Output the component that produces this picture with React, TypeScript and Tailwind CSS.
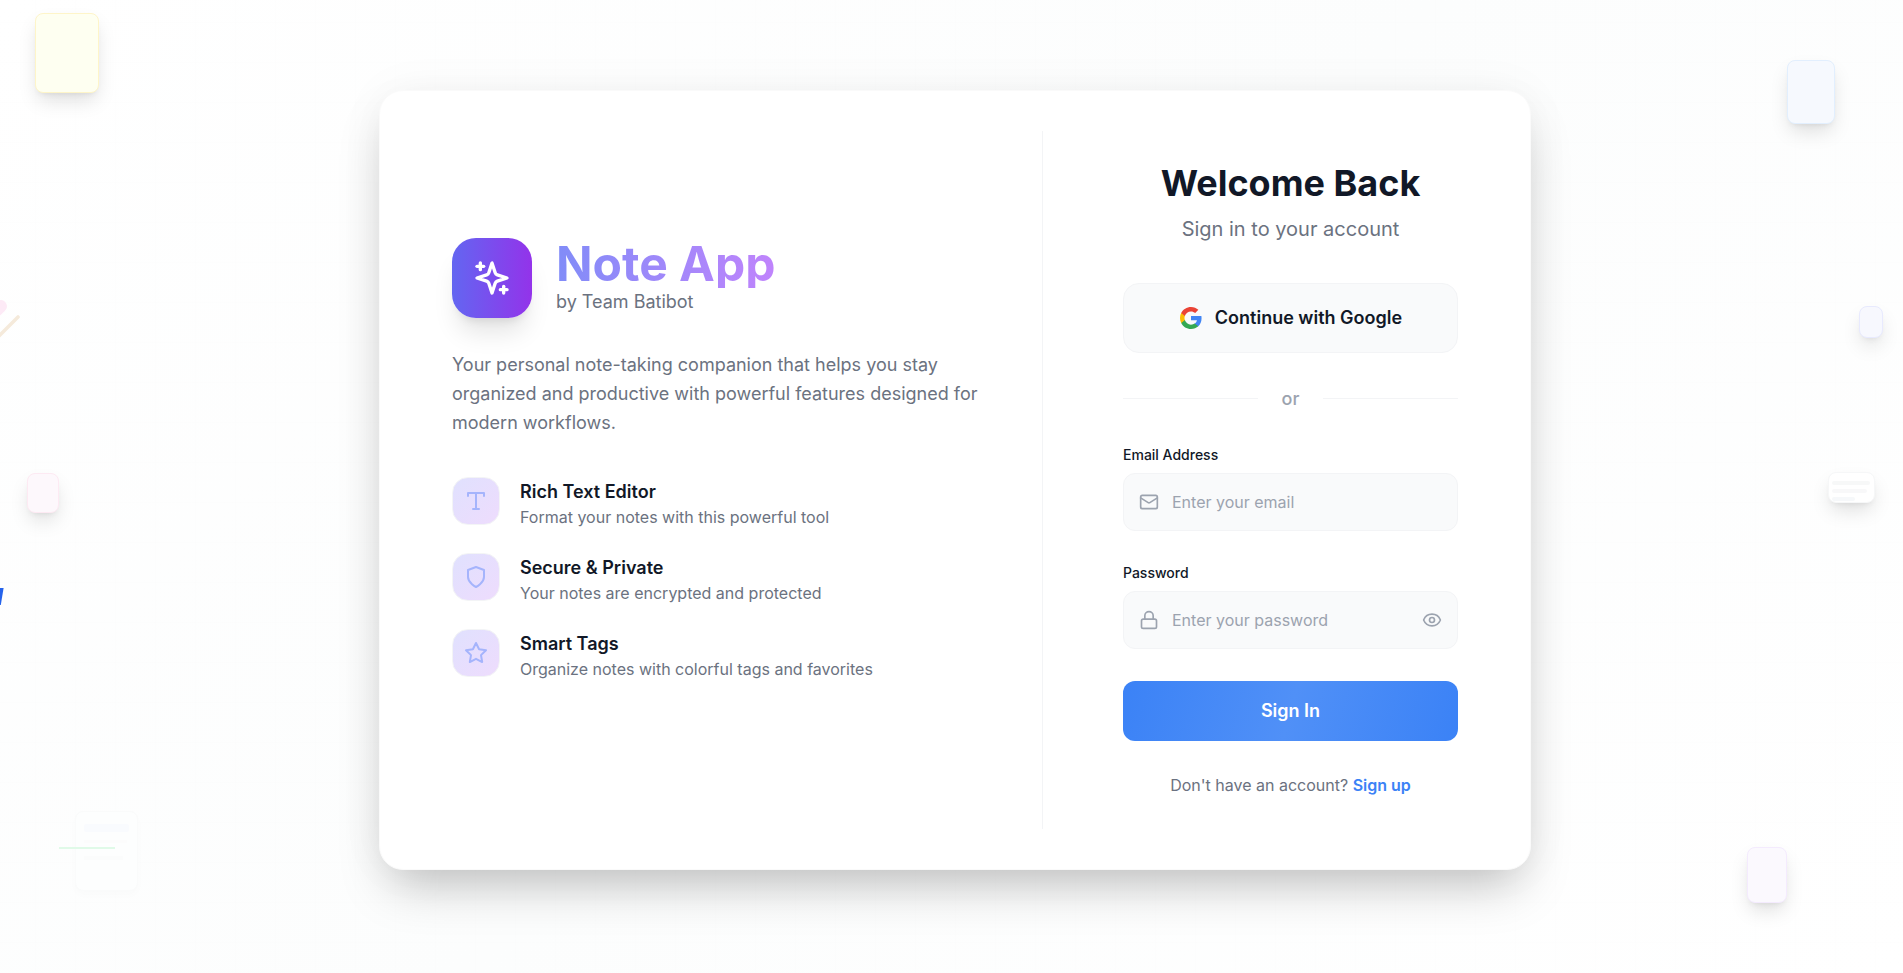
import React from "react";
import { Mail, Lock, Eye } from "lucide-react";

type IconProps = { className?: string; children: React.ReactNode };

function StrokeIcon({ className, children }: IconProps) {
  return (
    <svg viewBox="0 0 24 24" fill="none" stroke="currentColor" strokeWidth="2" strokeLinecap="round" strokeLinejoin="round" className={className}>
      {children}
    </svg>
  );
}

const typeShape = (
  <>
    <polyline points="4 7 4 4 20 4 20 7" />
    <line x1="9" x2="15" y1="20" y2="20" />
    <line x1="12" x2="12" y1="4" y2="20" />
  </>
);
const shieldShape = <path d="M12 22s8-4 8-10V5l-8-3-8 3v7c0 6 8 10 8 10" />;
const starShape = (
  <polygon points="12 2 15.09 8.26 22 9.27 17 14.14 18.18 21.02 12 17.77 5.82 21.02 7 14.14 2 9.27 8.91 8.26 12 2" />
);

const features = [
  { shape: typeShape, title: "Rich Text Editor", text: "Format your notes with this powerful tool" },
  { shape: shieldShape, title: "Secure & Private", text: "Your notes are encrypted and protected" },
  { shape: starShape, title: "Smart Tags", text: "Organize notes with colorful tags and favorites" },
];

function GoogleLogo() {
  return (
    <svg viewBox="0 0 24 24" className="size-6">
      <path fill="#4285F4" d="M22.56 12.25c0-.78-.07-1.53-.2-2.25H12v4.26h5.92c-.26 1.37-1.04 2.53-2.21 3.31v2.77h3.57c2.08-1.92 3.28-4.74 3.28-8.09z" />
      <path fill="#34A853" d="M12 23c2.97 0 5.46-.98 7.28-2.66l-3.57-2.77c-.98.66-2.23 1.06-3.71 1.06-2.86 0-5.29-1.93-6.16-4.53H2.18v2.84C3.99 20.53 7.7 23 12 23z" />
      <path fill="#FBBC05" d="M5.84 14.09c-.22-.66-.35-1.36-.35-2.09s.13-1.43.35-2.09V7.07H2.18C1.43 8.55 1 10.22 1 12s.43 3.45 1.18 4.93l2.85-2.22.81-.62z" />
      <path fill="#EA4335" d="M12 5.38c1.62 0 3.06.56 4.21 1.64l3.15-3.15C17.45 2.09 14.97 1 12 1 7.7 1 3.99 3.47 2.18 7.07l3.66 2.84c.87-2.6 3.3-4.53 6.16-4.53z" />
    </svg>
  );
}

const noteShadow = "shadow-[0_10px_20px_-3px_rgba(0,0,0,0.13),0_4px_6px_-4px_rgba(0,0,0,0.1)]";

function Backdrop() {
  return (
    <div className="pointer-events-none absolute inset-0 overflow-hidden" aria-hidden="true">
      <div className="absolute inset-0 bg-[linear-gradient(to_right,rgba(0,0,0,0.005)_1px,transparent_1px),linear-gradient(to_bottom,rgba(0,0,0,0.004)_1px,transparent_1px)] bg-[size:40px_40px] bg-[position:35px_22px]" />
      <div className={`absolute top-[13px] left-[35px] h-20 w-16 rounded-lg border border-[#fef5c9] bg-[#fefff1] ${noteShadow}`} />
      <div className={`absolute top-[473px] left-[27px] h-10 w-8 rounded-lg border border-[#fdeaf3] bg-[#fdf8fc] ${noteShadow}`} />
      <div className={`absolute top-[60px] left-[1787px] h-16 w-12 rounded-lg border border-[#e2effe] bg-[#f6f9fe] ${noteShadow}`} />
      <div className={`absolute top-[306px] left-[1859px] h-8 w-6 rounded-lg border border-[#e8eafe] bg-[#f7f8fe] ${noteShadow}`} />
      <div className={`absolute top-[847px] left-[1747px] h-14 w-10 rounded-lg border border-[#f4ebfe] bg-[#fbf9fe] ${noteShadow}`} />
      <div className={`absolute top-[472px] left-[1828px] flex h-[31px] w-[47px] flex-col gap-1 overflow-hidden rounded-lg border border-[#f6f7f8] bg-white px-[3px] pt-2 ${noteShadow}`}>
        <div className="h-1 w-[38px] shrink-0 rounded-xs bg-[#f7f8f8]" />
        <div className="h-1 w-[35px] shrink-0 rounded-xs bg-[#f8f8f9]" />
        <div className="h-1 w-[23px] shrink-0 rounded-xs bg-[#f6f8fa]" />
      </div>
      <div className="absolute top-[811px] left-[75px] flex h-20 w-[63px] flex-col rounded-lg border border-[#fafbfb] bg-[#fdfefe] px-2 pt-3 shadow-[0_4px_8px_rgba(0,0,0,0.015)]">
        <div className="h-2 w-[45px] shrink-0 rounded-xs bg-[#f9fbfe]" />
        <div className="mt-2 h-[3px] w-[43px] shrink-0 bg-[#fcfcfc]" />
        <div className="mt-[13px] h-1 w-[39px] shrink-0 bg-[#fbfcfc]" />
      </div>
      <div className="absolute top-[847px] left-[59px] h-0.5 w-14 bg-[#e0fae8]" />
      <svg className="absolute top-[295px] left-0 h-12 w-6" viewBox="0 0 24 48" fill="none">
        <path d="M-6 11C-3 4 3 3.500 6 8C8.500 13 6 15 0 20.500Z" fill="#fdeaf6" />
        <path d="M-3 43L18 22" stroke="#f5eadb" strokeWidth="3.6" strokeLinecap="round" />
      </svg>
      <svg className="absolute top-[588px] left-0 h-5 w-1" viewBox="0 0 4 20">
        <path d="M0 0H3.600L0.800 17H0Z" fill="#2563eb" />
      </svg>
    </div>
  );
}

const fieldClass =
  "block h-[58px] w-full rounded-xl border border-[#f3f4f6] bg-[#f9fafb] pr-12 pl-12 text-base text-gray-900 outline-none placeholder:text-[#9ca3af]";

export default function App() {
  return (
    <div className="relative h-[973px] w-full overflow-hidden bg-[linear-gradient(135deg,#ffffff_0%,#fcfdfd_50%,#ffffff_100%)] pt-[90px] pl-[7px] font-['Inter',sans-serif] antialiased">
      <Backdrop />
      <main className="relative mx-auto flex h-[780px] w-[1152px] rounded-3xl border border-[#fafafa] bg-white shadow-[0_25px_50px_-12px_rgba(0,0,0,0.25),0_0_50px_rgba(0,0,0,0.04)]">
        <section className="w-[662px] pt-[147px] pr-[59px] pl-[72px]">
          <div className="flex items-center gap-6">
            <div className="flex size-20 items-center justify-center rounded-3xl bg-[linear-gradient(to_right,#6366f1,#9333ea)] shadow-xl">
              <StrokeIcon className="size-10 text-white">
                <path d="m12 3-1.912 5.813a2 2 0 0 1-1.275 1.275L3 12l5.813 1.912a2 2 0 0 1 1.275 1.275L12 21l1.912-5.813a2 2 0 0 1 1.275-1.275L21 12l-5.813-1.912a2 2 0 0 1-1.275-1.275L12 3Z" />
                <path d="M5 3v4" />
                <path d="M19 17v4" />
                <path d="M3 5h4" />
                <path d="M17 19h4" />
              </StrokeIcon>
            </div>
            <div>
              <h1 className="bg-[linear-gradient(to_right,#818cf8,#c084fc)] bg-clip-text text-5xl leading-none font-bold text-transparent">Note App</h1>
              <p className="text-lg leading-7 text-[#6b7280]">by Team Batibot</p>
            </div>
          </div>
          <p className="mt-8 text-lg leading-[29px] text-[#6b7280]">
            Your personal note-taking companion that helps you stay organized and productive with powerful features designed for modern workflows.
          </p>
          <ul className="mt-10 flex flex-col gap-6">
            {features.map(({ shape, title, text }) => (
              <li key={title} className="flex items-start gap-5">
                <div className="flex size-12 shrink-0 items-center justify-center rounded-2xl border border-[#f3f4f6] bg-[linear-gradient(to_bottom_right,#e0e1fe,#eedcfd)]">
                  <StrokeIcon className="size-6 text-[#a5b4fc]">{shape}</StrokeIcon>
                </div>
                <div>
                  <h3 className="h-7 text-lg leading-[30px] font-semibold text-[#111827]">{title}</h3>
                  <p className="text-base leading-6 text-[#6b7280]">{text}</p>
                </div>
              </li>
            ))}
          </ul>
        </section>
        <div className="my-10 w-px bg-[#f3f4f6]" />
        <section className="flex-1 pt-[72px] pr-[72px] pl-20">
          <h2 className="text-center text-4xl leading-10 font-bold text-[#111827]">Welcome Back</h2>
          <p className="mt-3 text-center text-xl leading-7 text-[#6b7280]">Sign in to your account</p>
          <button className="mt-10 flex h-[70px] w-full items-center justify-center gap-3 rounded-2xl border border-[#f3f4f6] bg-[#f9fafb] text-lg font-semibold text-[#111827]">
            <GoogleLogo />
            Continue with Google
          </button>
          <div className="mt-8 flex items-center gap-6">
            <div className="mb-px h-px flex-1 bg-[#f3f4f6]" />
            <span className="text-lg leading-7 font-medium text-[#9ca3af]">or</span>
            <div className="mb-px h-px flex-1 bg-[#f3f4f6]" />
          </div>
          <label className="mt-8 block text-sm leading-5 font-medium text-[#111827]">Email Address</label>
          <div className="relative mt-2">
            <Mail className="absolute top-[19px] left-4 size-5 text-[#9ca3af]" />
            <input type="email" placeholder="Enter your email" className={fieldClass} />
          </div>
          <label className="mt-8 block text-sm leading-5 font-medium text-[#111827]">Password</label>
          <div className="relative mt-2">
            <Lock className="absolute top-[19px] left-4 size-5 text-[#9ca3af]" />
            <input type="password" placeholder="Enter your password" className={fieldClass} />
            <Eye className="absolute top-[19px] right-4 size-5 text-[#9ca3af]" />
          </div>
          <button className="mt-8 h-[60px] w-full rounded-xl bg-[linear-gradient(105deg,#3b82f6_0%,#5090f7_50%,#3b82f6_100%)] text-lg font-semibold text-white">
            Sign In
          </button>
          <p className="mt-8 text-center text-base leading-6 text-[#6b7280]">
            Don't have an account? <a className="font-semibold text-[#3b82f6]">Sign up</a>
          </p>
        </section>
      </main>
    </div>
  );
}
